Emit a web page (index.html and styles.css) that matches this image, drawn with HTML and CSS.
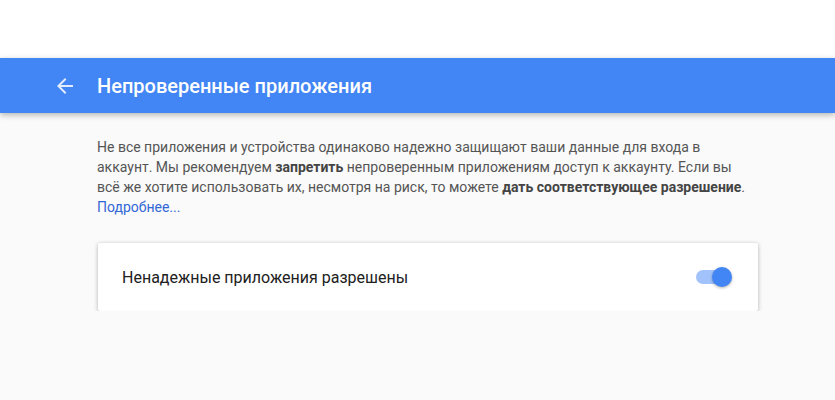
FILE: index.html
```html
<!DOCTYPE html>
<html lang="ru">
<head>
    <meta charset="UTF-8">
    <meta name="viewport" content="width=device-width, initial-scale=1.0">
    <title>Непроверенные приложения</title>
    <link rel="stylesheet" href="styles.css">
</head>
<body>
    <div class="top-space"></div>

    <!-- Header bar -->
    <header class="app-bar">
        <a class="back-button" href="#" aria-label="Назад">
            <svg width="24" height="24" viewBox="0 0 24 24">
                <path d="M20 11H7.83l5.59-5.59L12 4l-8 8 8 8 1.41-1.41L7.83 13H20v-2z" fill="#fff"/>
            </svg>
        </a>
        <h1>Непроверенные приложения</h1>
    </header>

    <main class="content">
        <p class="intro">
            Не все приложения и устройства одинаково надежно защищают ваши данные для входа в
            аккаунт. Мы рекомендуем <b>запретить</b> непроверенным приложениям доступ к аккаунту. Если вы
            всё же хотите использовать их, несмотря на риск, то можете <b>дать соответствующее разрешение</b>.
            <a href="#">Подробнее...</a>
        </p>

        <div class="setting-card">
            <span class="setting-label">Ненадежные приложения разрешены</span>
            <label class="switch">
                <input type="checkbox" checked>
                <span class="track"></span>
                <span class="knob"></span>
            </label>
        </div>
    </main>
</body>
</html>
```

FILE: styles.css
```css
* {
    margin: 0;
    padding: 0;
    box-sizing: border-box;
}
body {
    background-color: #fafafa;
    font-family: Roboto, "Noto Sans", Arial, sans-serif;
    color: #212121;
}
.top-space {
    height: 58px;
    background-color: #fff;
}
.app-bar {
    height: 55px;
    background-color: #4285f4;
    display: flex;
    align-items: center;
    padding-left: 53px;
    box-shadow: 0 2px 6px rgba(0, 0, 0, 0.28);
    position: relative;
}
.back-button {
    display: flex;
    width: 24px;
    height: 24px;
    opacity: 0.85;
}
.app-bar h1 {
    margin-left: 20px;
    font-size: 20px;
    font-weight: 500;
    color: #fff;
}
.content {
    width: 660px;
    margin-left: 98px;
    padding-top: 24px;
}
.intro {
    width: 652px;
    font-size: 14px;
    line-height: 20px;
    color: #555;
    margin-left: -1px;
}
.intro b {
    font-weight: 700;
    color: #444;
}
.intro a {
    color: #3367d6;
    text-decoration: none;
}
.setting-card {
    margin-top: 26px;
    height: 68px;
    background-color: #fff;
    border-radius: 2px;
    box-shadow: 0 1px 4px rgba(0, 0, 0, 0.3);
    display: flex;
    align-items: center;
    justify-content: space-between;
    padding: 0 26px 0 24px;
}
.setting-label {
    font-size: 16px;
    color: #212121;
}
.switch {
    position: relative;
    width: 36px;
    height: 20px;
    display: block;
    cursor: pointer;
}
.switch input {
    display: none;
}
.track {
    position: absolute;
    left: 0;
    top: 3px;
    width: 34px;
    height: 14px;
    border-radius: 7px;
    background-color: #a1c2fa;
}
.knob {
    position: absolute;
    left: 16px;
    top: 0;
    width: 20px;
    height: 20px;
    border-radius: 50%;
    background-color: #4285f4;
    box-shadow: 0 1px 3px rgba(0, 0, 0, 0.3);
}
```
